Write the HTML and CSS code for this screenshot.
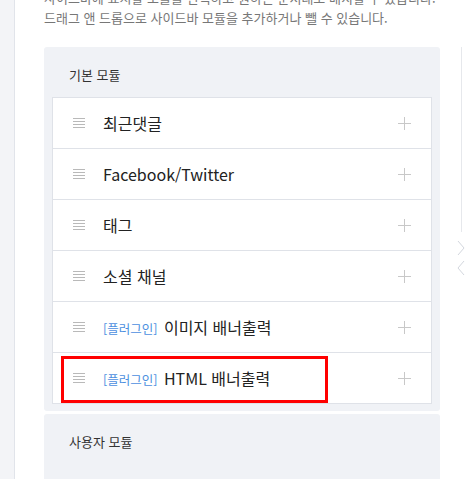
FILE: index.html
```html
<!DOCTYPE html>
<html lang="ko">
<head>
  <meta charset="UTF-8">
  <meta name="viewport" content="width=device-width, initial-scale=1.0">
  <title>사이드바 설정</title>
  <link rel="stylesheet" href="styles.css">
</head>
<body>

  <div class="strip"></div>

  <div class="main">
    <p class="desc">사이드바에 표시할 모듈을 선택하고 원하는 순서대로 배치할 수 있습니다.</p>
    <p class="desc">드래그 앤 드롭으로 사이드바 모듈을 추가하거나 뺄 수 있습니다.</p>

    <div class="panel">
      <h3 class="panel-title">기본 모듈</h3>
      <ul class="modules">
        <li class="module">
          <span class="handle"></span>
          <span class="name">최근댓글</span>
          <span class="plus"></span>
        </li>
        <li class="module">
          <span class="handle"></span>
          <span class="name">Facebook/Twitter</span>
          <span class="plus"></span>
        </li>
        <li class="module">
          <span class="handle"></span>
          <span class="name">태그</span>
          <span class="plus"></span>
        </li>
        <li class="module">
          <span class="handle"></span>
          <span class="name">소셜 채널</span>
          <span class="plus"></span>
        </li>
        <li class="module">
          <span class="handle"></span>
          <span class="name"><em class="tag">[플러그인]</em> 이미지 배너출력</span>
          <span class="plus"></span>
        </li>
        <li class="module marked">
          <span class="handle"></span>
          <span class="name"><em class="tag">[플러그인]</em> HTML 배너출력</span>
          <span class="plus"></span>
          <span class="highlight"></span>
        </li>
      </ul>
    </div>

    <div class="panel panel-user">
      <h3 class="panel-title">사용자 모듈</h3>
    </div>
  </div>

  <div class="side">
    <div class="side-line"></div>
    <svg class="chev" width="8" height="16" viewBox="0 0 8 16"><path d="M1 1 L7 8 L1 15" fill="none" stroke="#d3d7de" stroke-width="1"/></svg>
    <svg class="chev" width="8" height="16" viewBox="0 0 8 16"><path d="M7 1 L1 8 L7 15" fill="none" stroke="#d3d7de" stroke-width="1"/></svg>
  </div>

</body>
</html>
```

FILE: styles.css
```css
* {
  box-sizing: border-box;
}

html, body {
  height: 100%;
}

body {
  margin: 0;
  display: flex;
  overflow: hidden;
  background: #fff;
  font-family: "Noto Sans CJK KR", "Noto Sans", sans-serif;
  color: #222;
}

.strip {
  width: 15px;
  flex-shrink: 0;
  background: #f3f4f7;
  border-right: 1px solid #e1e4ea;
}

.main {
  width: 425px;
  padding-left: 29px;
  margin-top: -12px;
}

.desc {
  margin: 0;
  font-size: 13px;
  line-height: 20px;
  color: #777;
  white-space: nowrap;
}

.panel {
  margin-top: 19px;
  padding: 18px 8px 7px;
  background: #f0f2f6;
  border-radius: 3px;
}

.panel-title {
  margin: 0 0 12px;
  padding-left: 17px;
  font-size: 13px;
  font-weight: normal;
  line-height: 20px;
  color: #333;
}

.modules {
  list-style: none;
  margin: 0;
  padding: 0;
  background: #fff;
  border: 1px solid #dfe2e8;
  border-bottom: none;
}

.module {
  position: relative;
  display: flex;
  align-items: center;
  height: 51px;
  padding: 0 20px;
  border-bottom: 1px solid #dfe2e8;
}

.handle {
  width: 12px;
  height: 10px;
  margin-right: 18px;
  background: repeating-linear-gradient(#b9b9b9 0 1px, transparent 1px 3px);
}

.name {
  flex: 1;
  font-size: 16px;
  color: #222;
  white-space: nowrap;
}

.tag {
  font-style: normal;
  font-size: 12.5px;
  color: #4d8fe0;
  margin-right: 2px;
}

.plus {
  position: relative;
  width: 13px;
  height: 13px;
}

.plus::before,
.plus::after {
  content: "";
  position: absolute;
  background: #c8c8c8;
}

.plus::before {
  left: 6px;
  top: 0;
  width: 1px;
  height: 13px;
}

.plus::after {
  left: 0;
  top: 6px;
  width: 13px;
  height: 1px;
}

.highlight {
  position: absolute;
  left: 8px;
  top: 3px;
  width: 267px;
  height: 47px;
  border: 3px solid #f00;
}

.panel-user {
  margin-top: 3px;
  height: 66px;
  border-radius: 3px 3px 0 0;
}

.side {
  flex: 1;
  padding-top: 47px;
  padding-left: 17px;
}

.side-line {
  width: 1px;
  height: 185px;
  margin-left: 4px;
  background: #e6e8ec;
}

.chev {
  display: block;
  margin-top: 8px;
}

.chev + .chev {
  margin-top: 4px;
}
```
